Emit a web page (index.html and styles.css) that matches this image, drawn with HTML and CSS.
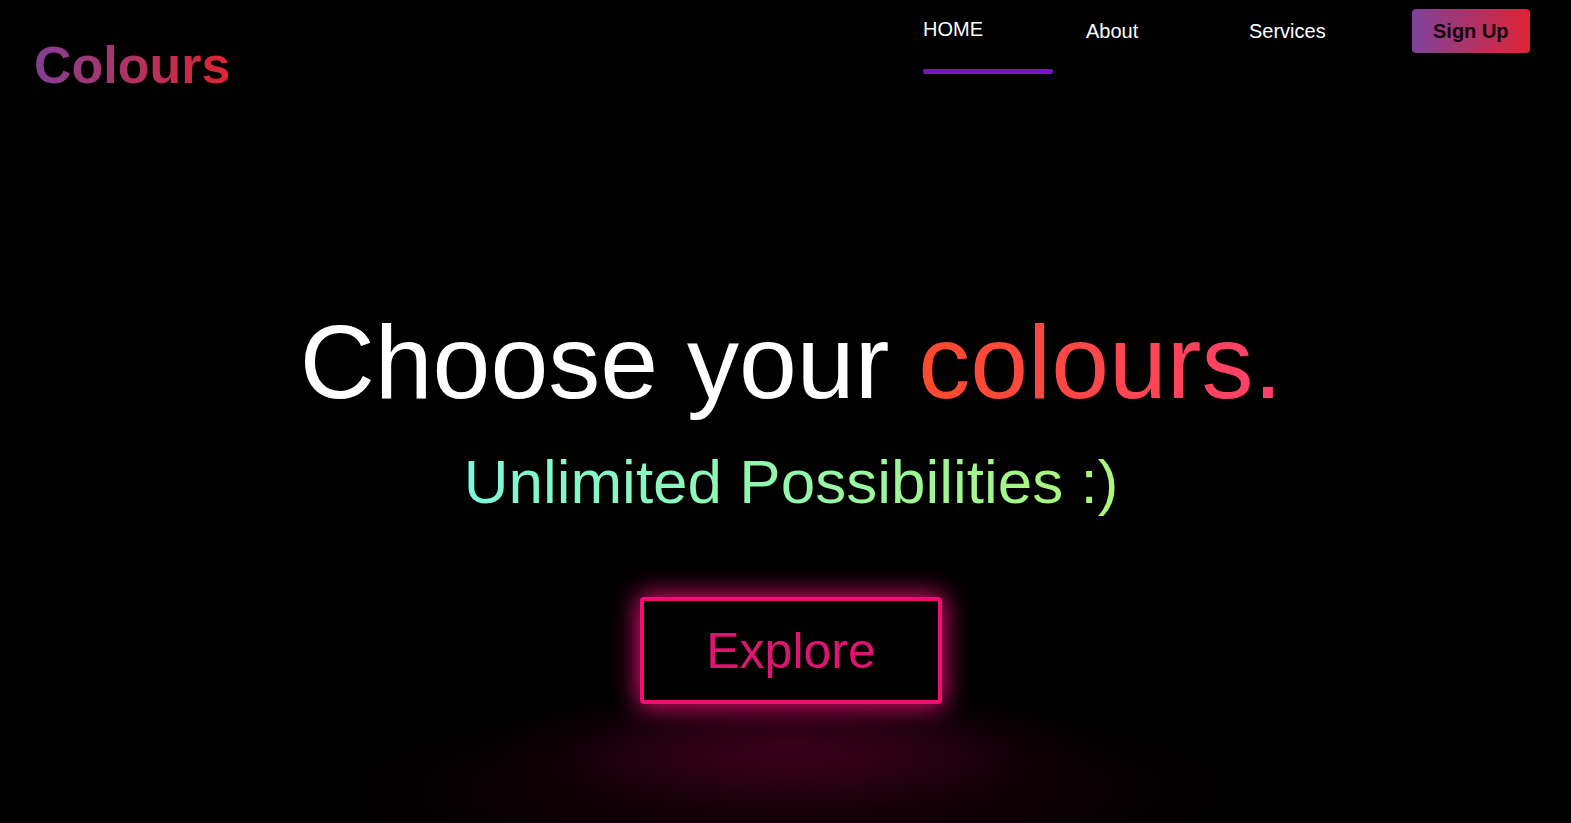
FILE: index.html
```html
<!DOCTYPE html>
<html lang="en">
<head>
<meta charset="utf-8">
<title>Colours</title>
<meta name="viewport" content="width=device-width, initial-scale=1">
<link rel="stylesheet" href="styles.css">
</head>
<body>
<header class="header">
  <a class="logo" href="#">Colours</a>
  <nav class="nav">
    <a class="nav-link nav-link-active" href="#">HOME</a>
    <a class="nav-link" href="#about">About</a>
    <a class="nav-link" href="#services">Services</a>
    <button class="sign-up" type="button">Sign Up</button>
  </nav>
</header>
<main class="hero">
  <h1 class="title">Choose your <span class="title-accent">colours.</span></h1>
  <p class="subtitle">Unlimited Possibilities :)</p>
  <button class="explore" type="button">Explore</button>
</main>
</body>
</html>
```

FILE: styles.css
```css
* {
  box-sizing: border-box;
}

body {
  margin: 0;
  min-height: 100vh;
  overflow: hidden;
  background: #000;
  color: #fff;
  font-family: "Liberation Sans", Arial, sans-serif;
}

.header {
  display: flex;
  justify-content: space-between;
  align-items: flex-start;
  padding: 9px 29px 0 34px;
}

.logo {
  margin-top: 26px;
  font-size: 52px;
  line-height: 60px;
  font-weight: bold;
  text-decoration: none;
  color: transparent;
  background: linear-gradient(to right, #833f95, #df2530);
  background-clip: text;
  -webkit-background-clip: text;
}

.nav {
  display: grid;
  grid-template-columns: repeat(4, 130px);
  column-gap: 33px;
  align-items: start;
}

.nav-link {
  padding-top: 10px;
  font-size: 20px;
  line-height: 24px;
  color: #fff;
  text-decoration: none;
}

.nav-link-active {
  padding-top: 8px;
}

.nav-link-active::after {
  content: "";
  display: block;
  height: 5px;
  margin-top: 28px;
  border-radius: 2px;
  background: #7714d3;
}

.sign-up {
  justify-self: start;
  height: 44px;
  padding: 0 21px;
  border: 0;
  border-radius: 4px;
  background: linear-gradient(to right, #7f429b, #dd2433);
  color: #12000c;
  font: bold 20px/24px "Liberation Sans", Arial, sans-serif;
}

.hero {
  display: flex;
  flex-direction: column;
  align-items: center;
  padding: 207px 0 119px 11px;
}

.title {
  margin: 0;
  font-size: 104px;
  line-height: 120px;
  font-weight: normal;
}

.title-accent {
  color: transparent;
  background: linear-gradient(to right, #ff4b2b, #ff416c);
  background-clip: text;
  -webkit-background-clip: text;
}

.subtitle {
  margin: 24px 0 0;
  font-size: 62px;
  line-height: 72px;
  color: transparent;
  background: linear-gradient(to right, #7cf8da, #acf778);
  background-clip: text;
  -webkit-background-clip: text;
}

.explore {
  position: relative;
  margin-top: 79px;
  padding: 21px 62px 19px;
  border: 4px solid #ec0f74;
  border-radius: 4px;
  background: #000;
  color: #dd1570;
  font: 50px/59px "Liberation Sans", Arial, sans-serif;
  box-shadow: 0 0 26px 2px #ec0f74;
}

/* Reflected light on the floor under the button */
.explore::before {
  content: "";
  position: absolute;
  top: calc(100% + 4px);
  left: 50%;
  width: 1040px;
  height: 160px;
  transform: translateX(-50%);
  background:
    radial-gradient(300px 64px at 50% 42px, rgba(236, 0, 110, 0.18), rgba(236, 0, 110, 0.13) 35%, rgba(236, 0, 110, 0.03) 75%, transparent),
    radial-gradient(480px 96px at 50% 86px, rgba(236, 0, 90, 0.12), rgba(236, 0, 90, 0.08) 40%, rgba(236, 0, 90, 0.02) 75%, transparent);
  pointer-events: none;
}
```
